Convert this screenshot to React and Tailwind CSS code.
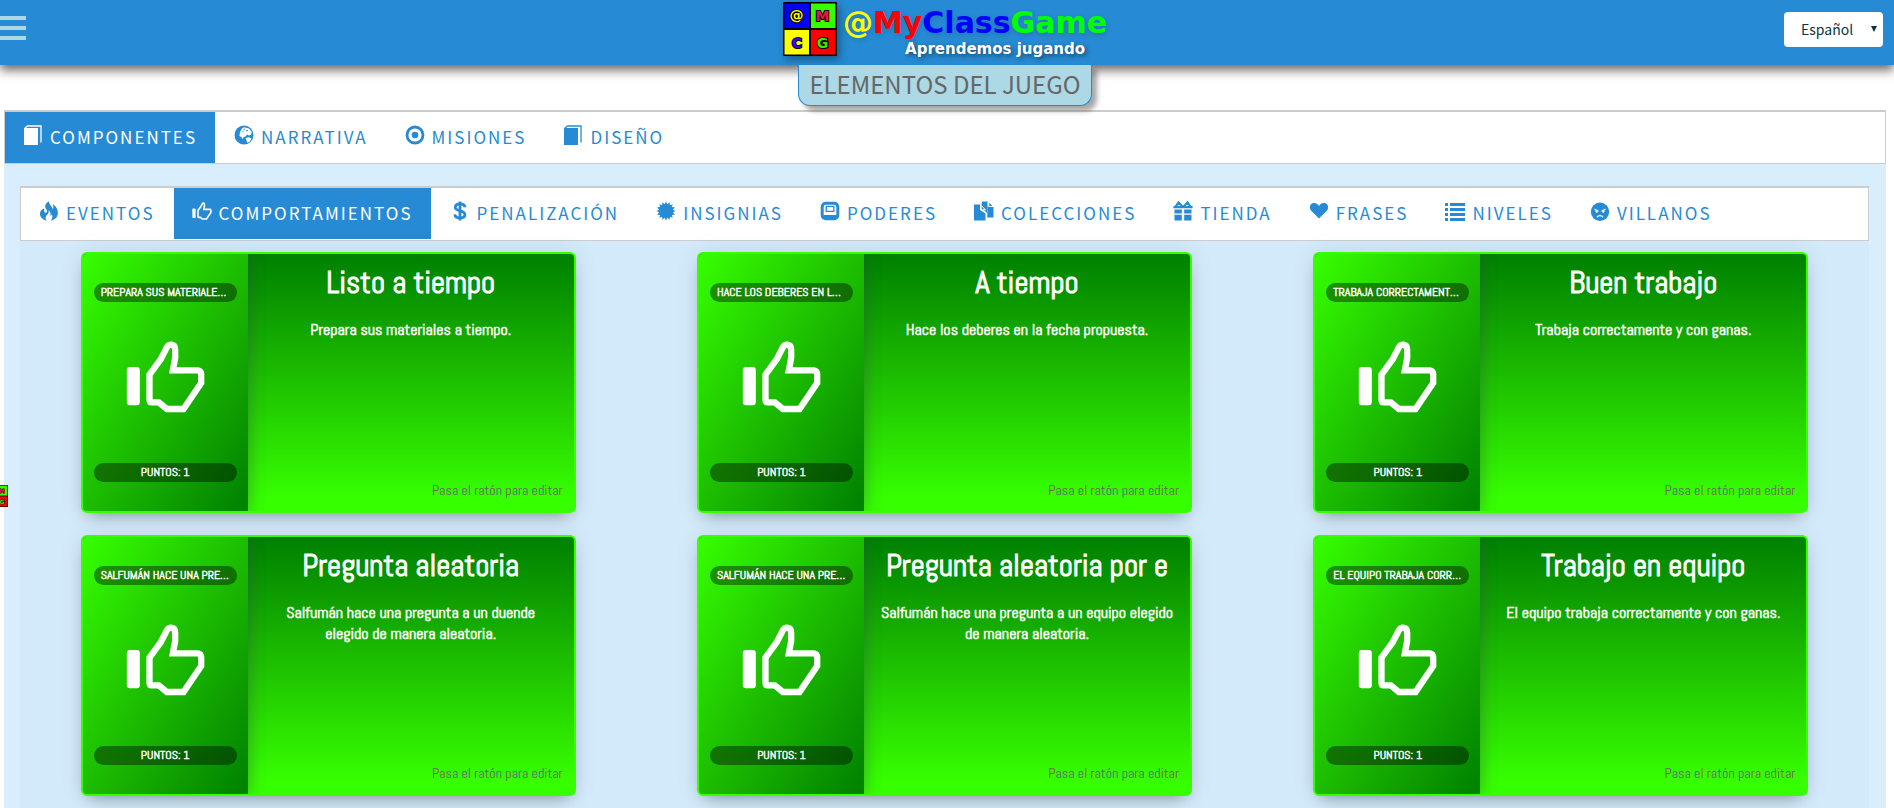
import React from 'react';

const HAND =
  'M238 405 L272 358 L290 323 Q295 315 303 315 Q315 316 315 330 V355 L308 392 H383 Q393 393 393 405 V430 L340 508 H290 L266 488 H245 Q238 488 238 480 Z';

function ThumbIcon({ className }) {
  return (
    <svg viewBox="168 304 236 216" className={className} aria-hidden="true">
      <rect x="170" y="382" width="39" height="115" rx="9" fill="currentColor" />
      <path d={HAND} fill="none" stroke="currentColor" strokeWidth="19" />
    </svg>
  );
}

function burst(points, cx, cy, outer, inner) {
  return Array.from({ length: points * 2 }, (_, i) => {
    const r = i % 2 === 0 ? outer : inner;
    const a = (Math.PI * i) / points - Math.PI / 2;
    return `${(cx + r * Math.cos(a)).toFixed(2)},${(cy + r * Math.sin(a)).toFixed(2)}`;
  }).join(' ');
}

const drawings = {
  book: (
    <>
      <path d="M1 3.500 2.500 3H15v17H1z" fill="currentColor" />
      <path d="M1.500 3.500 4.500 1H18v16.500" fill="none" stroke="currentColor" strokeWidth="1.300" />
    </>
  ),
  globe: (
    <>
      <circle cx="10" cy="10" r="9.500" fill="currentColor" />
      <path
        d="M8 3.500 10 2.200l2 .6 3 .6 2.600 3.200-.4 3.200-2.400.8-1.800-1-1.400 1.800-2 .6-.8 2.200-1.800-2.400-1.600-.8L6 7z"
        fill="#fff"
      />
      <path d="M9.500 4.200h1.600M12 5.600h1.800M8.400 6.800l1.200-.8" stroke="currentColor" strokeWidth="1" />
      <path d="m11.500 13 3.500-.8 2.600 1.200-1.800 3-2.400 1.400z" fill="#fff" />
    </>
  ),
  record: (
    <>
      <circle cx="10" cy="10" r="8" fill="none" stroke="currentColor" strokeWidth="2.800" />
      <circle cx="10" cy="10" r="3.300" fill="currentColor" />
    </>
  ),
  fire: (
    <path
      d="M10.200.3C6.500 2 5 5 7.300 8.200c1.200 1.700.8 3.400-.4 3.600-1.400.2-2-1.500-1.600-4.200C2.500 8.200.7 10.600 1 13.400c.2 3 3 5.300 6.600 6-1.500-2-1.300-4 .4-5.500 1.400-1.300 2-2.700 1.600-4.700 2 1.500 2.600 3.700 1.500 5.800.9-.2 1.500-.8 1.800-1.700.9 2.200.5 4.300-1 6.300 4.400-.8 7-3.700 7-7.800 0-4-2-6.700-5.200-8.900.8 2.200 1 4.200-.1 5.400C13.600 5 9.400 4 10.200.3z"
      fill="currentColor"
    />
  ),
  dollar: (
    <path
      d="M15 6.200C14.600 4 12.800 2.900 10 2.900S5.300 4.200 5.300 6.300c0 2.300 2 2.900 4.700 3.500s4.900 1.300 4.900 3.800c0 2.300-2 3.500-4.900 3.500-3.100 0-4.900-1.300-5.200-3.700M10 .4v19.200"
      fill="none"
      stroke="currentColor"
      strokeWidth="2.800"
    />
  ),
  certificate: <polygon points={burst(16, 10, 10, 9.6, 7)} fill="currentColor" />,
  powers: (
    <>
      <rect x="2.200" y="2.200" width="15.600" height="15.600" rx="3.600" fill="none" stroke="currentColor" strokeWidth="3" />
      <rect x="6.200" y="5.400" width="7.600" height="5" fill="none" stroke="currentColor" strokeWidth="1.300" />
      <path d="M3.500 14h13v3h-13z" fill="currentColor" />
    </>
  ),
  copies: (
    <>
      <path d="M0 3.500h6v5.500l5.500 3.500v7.100H0z" fill="currentColor" />
      <path d="M8 .5h5.500v16.100h-1V11L7 7.500z" fill="currentColor" />
      <path d="M13.500 5.500h6v11h-6z" fill="currentColor" />
      <path d="M7.200 4.500v4.300h4.300zM14.800 1v4.500h4.700z" fill="currentColor" stroke="#fff" strokeWidth="1" />
      <path d="M12.500 12v8" stroke="#fff" strokeWidth="1" />
    </>
  ),
  gift: (
    <>
      <path d="M10 6.200 5.500 1.400 2.600 5.700M10 6.200l4.500-4.800 2.900 4.300" fill="none" stroke="currentColor" strokeWidth="2.100" />
      <path d="M.4 5h7.200l2.400 1 2.400-1h7.200v2.200H.4zM1.500 8.500h7.300v4H1.500zM11.200 8.500h7.300v4h-7.300zM1.500 13.800h7.300v5.800H1.500zM11.200 13.800h7.300v5.800h-7.300z" fill="currentColor" />
    </>
  ),
  heart: <path d="M10 17.500 2 9.500C-.5 6.400 1.200 2 5 2c2.300 0 4 1.200 5 3 1-1.800 2.700-3 5-3 3.800 0 5.500 4.400 3 7.500z" fill="currentColor" />,
  list: (
    <path
      d="M0 2h3v3H0zM5 2h15v3H5zM0 7h3v3H0zM5 7h15v3H5zM0 12h3v3H0zM5 12h15v3H5zM0 17h3v3H0zM5 17h15v3H5z"
      fill="currentColor"
    />
  ),
  villain: (
    <>
      <circle cx="10" cy="10.800" r="9.200" fill="currentColor" />
      <path d="m4.500 8 4 2.300M15.500 8l-4 2.300M7 16.200c1.200-2.200 4.800-2.200 6 0" fill="none" stroke="#fff" strokeWidth="1.300" />
      <path d="M5.500 9.200 8 10.600l-1 1.300-1.500-.8zM14.500 9.200 12 10.600l1 1.300 1.500-.8z" fill="#fff" />
    </>
  ),
};

function TabIcon({ name }) {
  if (name === 'thumb') return <ThumbIcon className="mb-1 h-[18px] w-5" />;
  return (
    <svg viewBox="0 0 20 20" className="mb-1 size-5" aria-hidden="true">
      {drawings[name]}
    </svg>
  );
}

function Tab({ icon, label, active }) {
  return (
    <li>
      <a
        href="#"
        aria-current={active ? 'page' : undefined}
        className={
          'flex h-[51px] items-center gap-[7px] px-[18px] pb-[2px] ' +
          (active ? 'bg-[#268bd4] text-white' : 'text-[#268bd4]')
        }
      >
        <TabIcon name={icon} />
        <span className="text-[17px] leading-6 tracking-[2px]">{label}</span>
      </a>
    </li>
  );
}

function Logo({ className }) {
  return (
    <svg viewBox="0 0 54 54" className={className} role="img" aria-label="MyClassGame">
      <rect width="54" height="54" rx="1" fill="#000" />
      <rect x="1.500" y="1.500" width="24.500" height="24.500" fill="#00f" />
      <rect x="28" y="1.500" width="24.500" height="24.500" fill="#3f0" />
      <rect x="1.500" y="28" width="24.500" height="24.500" fill="#ff0" />
      <rect x="28" y="28" width="24.500" height="24.500" fill="#f00" />
      <g
        className="font-['DejaVu_Sans',sans-serif] text-[14px] font-bold"
        textAnchor="middle"
        stroke="#000"
        strokeWidth="2"
        paintOrder="stroke"
      >
        <text x="13.500" y="17.500" fill="#ff0">@</text>
        <text x="39.500" y="19" fill="#f0134d">M</text>
        <text x="14" y="46" fill="#40f">C</text>
        <text x="39.500" y="46" fill="#3e0">G</text>
      </g>
    </svg>
  );
}

function Pill({ children }) {
  return (
    <p className="w-full truncate rounded-full bg-black/40 px-[7px] text-center text-xs leading-[19px] uppercase [-webkit-text-stroke:0.04em]">
      {children}
    </p>
  );
}

function Card({ title, text }) {
  return (
    <article className="flex h-[261px] w-full max-w-[495px] overflow-hidden rounded-md border-2 border-[#36ff00] bg-linear-to-b from-[#008000] to-[#36ff00] to-95% font-['Abel','Roboto_Condensed',sans-serif] text-white shadow-[0_8px_16px_-8px_rgba(0,0,0,0.4),0_0_24px_rgba(0,0,0,0.08)]">
      <div className="flex w-[165px] shrink-0 flex-col items-center bg-linear-to-br from-[#36ff00] to-[#008000] px-[11px] py-[29px] shadow-[2px_0_14px_rgba(60,70,90,0.4)]">
        <Pill>{text}</Pill>
        <ThumbIcon className="mt-[39px] h-[72px] w-[79px]" />
        <div className="mt-auto w-full">
          <Pill>Puntos: 1</Pill>
        </div>
      </div>
      <div className="flex min-w-0 flex-1 flex-col px-[11px] pt-2 pb-[11px]">
        <h2 className="text-center text-[31px] leading-[41px] [-webkit-text-stroke:0.035em]">{title}</h2>
        <p className="mx-[5px] mt-4 text-center text-base leading-[21px] [-webkit-text-stroke:0.035em]">{text}</p>
        <p className="mt-auto text-right text-sm leading-5 text-[#666]">Pasa el ratón para editar</p>
      </div>
    </article>
  );
}

const sections = [
  { icon: 'book', label: 'COMPONENTES', active: true },
  { icon: 'globe', label: 'NARRATIVA' },
  { icon: 'record', label: 'MISIONES' },
  { icon: 'book', label: 'DISEÑO' },
];

const components = [
  { icon: 'fire', label: 'EVENTOS' },
  { icon: 'thumb', label: 'COMPORTAMIENTOS', active: true },
  { icon: 'dollar', label: 'PENALIZACIÓN' },
  { icon: 'certificate', label: 'INSIGNIAS' },
  { icon: 'powers', label: 'PODERES' },
  { icon: 'copies', label: 'COLECCIONES' },
  { icon: 'gift', label: 'TIENDA' },
  { icon: 'heart', label: 'FRASES' },
  { icon: 'list', label: 'NIVELES' },
  { icon: 'villain', label: 'VILLANOS' },
];

const behaviours = [
  { title: 'Listo a tiempo', text: 'Prepara sus materiales a tiempo.' },
  { title: 'A tiempo', text: 'Hace los deberes en la fecha propuesta.' },
  { title: 'Buen trabajo', text: 'Trabaja correctamente y con ganas.' },
  { title: 'Pregunta aleatoria', text: 'Salfumán hace una pregunta a un duende elegido de manera aleatoria.' },
  { title: 'Pregunta aleatoria por e', text: 'Salfumán hace una pregunta a un equipo elegido de manera aleatoria.' },
  { title: 'Trabajo en equipo', text: 'El equipo trabaja correctamente y con ganas.' },
];

export default function App() {
  return (
    <div className="relative min-h-screen overflow-x-clip bg-white font-['Noto_Sans_CJK_JP',sans-serif]">
      <header className="relative grid h-[65px] grid-cols-[1fr_auto_1fr] bg-[#268bd4] shadow-[0_5px_10px_rgba(0,0,0,0.6)]">
        <button type="button" aria-label="Menú" className="mt-4 flex h-6 w-[26px] flex-col justify-between">
          <span className="h-1 w-full bg-[#add8e6]" />
          <span className="h-1 w-full bg-[#add8e6]" />
          <span className="h-1 w-full bg-[#add8e6]" />
        </button>
        <a href="#" className="mr-1 flex gap-[6px] pt-[2px] font-['DejaVu_Sans',sans-serif] font-bold">
          <Logo className="size-[54px] shadow-[3px_4px_8px_rgba(0,0,0,0.35)]" />
          <span className="flex flex-col pt-[5px]">
            <span className="text-[30px] leading-8 [text-shadow:1px_2px_5px_rgba(0,0,0,0.15)]">
              <span className="text-[#ff0]">@</span>
              <span className="text-[#f00]">My</span>
              <span className="text-[#00f]">Class</span>
              <span className="text-[#0f0]">Game</span>
            </span>
            <span className="pr-[22px] text-right text-[15px] leading-5 text-white [text-shadow:2px_2px_5px_rgba(0,0,0,0.5)]">
              Aprendemos jugando
            </span>
          </span>
        </a>
        <div className="relative mt-3 mr-[11px] h-[35px] w-[99px] justify-self-end">
          <select
            aria-label="Idioma"
            className="h-full w-full appearance-none rounded-[4px] bg-white pb-[2px] pl-[17px] text-sm text-[#073642]"
          >
            <option>Español</option>
          </select>
          <svg viewBox="0 0 6 6" className="pointer-events-none absolute top-[14px] right-[6px] size-[6px]" aria-hidden="true">
            <path d="M0 0h6L3 6z" fill="#073642" />
          </svg>
        </div>
      </header>

      <div className="relative mr-2 mb-1 ml-1 flex justify-center">
        <h1 className="rounded-b-[12px] border border-t-0 border-[#268bd4] bg-[#add8e6] px-[10px] pb-[2px] text-2xl leading-[38px] text-[#666] shadow-[5px_5px_5px_rgba(0,0,0,0.35)]">
          ELEMENTOS DEL JUEGO
        </h1>
      </div>

      <main className="mr-2 ml-1 bg-[#d9eefc]">
        <nav aria-label="Secciones" className="border border-t-2 border-[#ccc] bg-white">
          <ul className="flex gap-px">
            {sections.map((t) => (
              <Tab key={t.label} {...t} />
            ))}
          </ul>
        </nav>
        <div className="pt-[22px] pr-[17px] pl-4">
          <nav aria-label="Componentes" className="border border-t-2 border-[#ccc] bg-white pb-px">
            <ul className="flex gap-px">
              {components.map((t) => (
                <Tab key={t.label} {...t} />
              ))}
            </ul>
          </nav>
          <section className="grid grid-cols-3 justify-items-center gap-y-[22px] bg-[#d3eafa] pt-[11px] pb-[13px]">
            {behaviours.map((b) => (
              <Card key={b.title} {...b} />
            ))}
          </section>
        </div>
      </main>

      <div className="absolute top-[485px] left-0 w-2 overflow-hidden">
        <Logo className="-ml-[14px] size-[22px] max-w-none" />
      </div>
    </div>
  );
}
